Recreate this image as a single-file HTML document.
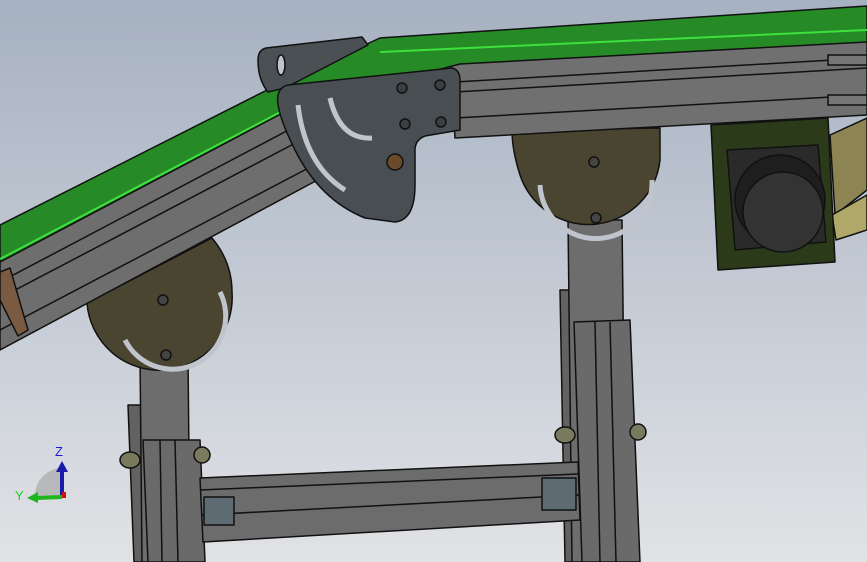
<!DOCTYPE html>
<html><head><style>
html,body{margin:0;padding:0;width:867px;height:562px;overflow:hidden}
</style></head><body>
<svg width="867" height="562" viewBox="0 0 867 562" xmlns="http://www.w3.org/2000/svg" font-family="Liberation Sans, sans-serif">
<defs>
<linearGradient id="bg" x1="0" y1="0" x2="0" y2="1">
<stop offset="0" stop-color="#a6b1c1"/><stop offset="0.6" stop-color="#c9cfd8"/><stop offset="1" stop-color="#e1e2e5"/>
</linearGradient>
</defs>
<rect width="867" height="562" fill="url(#bg)"/>
<g stroke="#111" stroke-width="1.5" stroke-linejoin="round">
<!-- right tan frame -->
<polygon points="830,135 867,118 867,190 835,215" fill="#8c8452"/>
<polygon points="832,215 867,195 867,230 836,240" fill="#b0a868"/>
<!-- left lower legs -->
<polygon points="128,405 148,405 150,562 134,562" fill="#626262"/>
<polygon points="140,355 188,355 190,562 142,562" fill="#6d6d6d"/>
<polygon points="143,440 200,440 205,562 148,562" fill="#6a6a6a"/>
<line x1="160" y1="440" x2="162" y2="562"/><line x1="175" y1="440" x2="178" y2="562"/>
<ellipse cx="130" cy="460" rx="10" ry="8" fill="#7a7a5e"/>
<ellipse cx="202" cy="455" rx="8" ry="8" fill="#7a7a5e"/>
<!-- right legs -->
<polygon points="560,290 578,290 580,562 565,562" fill="#626262"/>
<polygon points="568,220 622,220 626,562 572,562" fill="#6d6d6d"/>
<polygon points="574,322 630,320 640,562 582,562" fill="#6a6a6a"/>
<line x1="595" y1="322" x2="600" y2="562"/><line x1="610" y1="322" x2="616" y2="562"/>
<ellipse cx="565" cy="435" rx="10" ry="8" fill="#7a7a5e"/>
<ellipse cx="638" cy="432" rx="8" ry="8" fill="#7a7a5e"/>
<!-- crossbar -->
<polygon points="200,478 578,462 580,520 203,542" fill="#6c6c6c"/>
<line x1="200" y1="490" x2="578" y2="474"/><line x1="202" y1="515" x2="579" y2="495"/>
<rect x="204" y="497" width="30" height="28" fill="#5f6b72"/>
<rect x="542" y="478" width="34" height="32" fill="#5f6b72"/>
<!-- left disc -->
<path d="M87,303 L212,238 Q232,262 232,292 A67,67 0 0 1 87,303 Z" fill="#4a4530"/>
<path d="M125,340 A50,50 0 0 0 220,292" fill="none" stroke="#c0c4cc" stroke-width="5"/>
<circle cx="163" cy="300" r="5" fill="#444"/>
<circle cx="166" cy="355" r="5" fill="#444"/>
<!-- right disc -->
<path d="M512,130 L660,128 L660,160 A72,72 0 0 1 520,175 Q512,150 512,130 Z" fill="#4a4530"/>
<path d="M540,185 A55,55 0 0 0 652,180" fill="none" stroke="#c0c4cc" stroke-width="5"/>
<circle cx="594" cy="162" r="5" fill="#444"/>
<circle cx="596" cy="218" r="5" fill="#444"/>
<!-- incline profile -->
<polygon points="0,262 292,108 325,176 0,350" fill="#6e6e6e"/>
<line x1="0" y1="282" x2="300" y2="124"/><line x1="0" y1="298" x2="305" y2="138"/><line x1="0" y1="330" x2="318" y2="163"/>
<!-- left brown bracket -->
<polygon points="0,272 10,268 28,330 18,336 0,300" fill="#7a5a40"/>
<!-- horizontal profile -->
<polygon points="450,64 867,40 867,115 455,138" fill="#707070"/>
<line x1="455" y1="82" x2="867" y2="58"/><line x1="455" y1="92" x2="867" y2="68"/><line x1="455" y1="118" x2="867" y2="95"/>
<!-- green belt -->
<polygon points="0,225 275,86 380,38 867,6 867,42 460,64 292,108 0,262" fill="#268a26"/>
<line x1="0" y1="259" x2="290" y2="107" stroke="#3ee03e" stroke-width="2"/>
<line x1="380" y1="52" x2="867" y2="30" stroke="#3ee03e" stroke-width="2"/>
<!-- back plate -->
<path d="M266,48 L362,37 L368,45 L285,88 L268,92 Q258,80 258,60 Q258,50 266,48 Z" fill="#4a5054"/>
<ellipse cx="281" cy="65" rx="4" ry="10" fill="#c0c4cc"/>
<!-- front plate -->
<path d="M288,85 L452,68 Q460,70 460,80 L460,130 L425,136 Q415,140 415,150 L415,185 Q415,220 395,222 L365,218 Q320,200 295,150 Q275,110 278,95 Q280,87 288,85 Z" fill="#484e52"/>
<path d="M298,105 Q305,165 345,190" fill="none" stroke="#c0c4cc" stroke-width="5"/>
<path d="M330,98 Q340,140 372,138" fill="none" stroke="#c0c4cc" stroke-width="5"/>
<circle cx="402" cy="88" r="5" fill="#3a3f42"/><circle cx="440" cy="85" r="5" fill="#3a3f42"/>
<circle cx="405" cy="124" r="5" fill="#3a3f42"/><circle cx="441" cy="122" r="5" fill="#3a3f42"/>
<circle cx="395" cy="162" r="8" fill="#6a4a2a"/>
<!-- right end bolts -->
<rect x="828" y="55" width="39" height="10" fill="#777"/>
<rect x="828" y="95" width="39" height="10" fill="#777"/>
<!-- motor -->
<polygon points="711,125 828,118 835,262 718,270" fill="#2b3a18"/>
<polygon points="727,150 818,145 826,242 735,250" fill="#2a2a2a"/>
<circle cx="780" cy="200" r="45" fill="#1e1e1e"/>
<circle cx="783" cy="212" r="40" fill="#333"/>
</g>
<!-- axis triad -->
<path d="M35,497 A28,28 0 0 1 60,468 L60,497 Z" fill="#a9a9a9" opacity="0.7"/>
<line x1="62" y1="497" x2="62" y2="470" stroke="#1a1aa8" stroke-width="4"/>
<polygon points="56,472 62,461 68,472" fill="#1a1aa8"/>
<line x1="62" y1="497" x2="36" y2="498" stroke="#1fb51f" stroke-width="4"/>
<polygon points="38,492 27,498 38,503" fill="#1fb51f"/>
<rect x="62" y="492" width="4" height="6" fill="#d01010"/>
<text x="55" y="456" font-size="13" fill="#1a1ae0">Z</text>
<text x="15" y="500" font-size="13" fill="#1fd01f">Y</text>
</svg>
</body></html>
